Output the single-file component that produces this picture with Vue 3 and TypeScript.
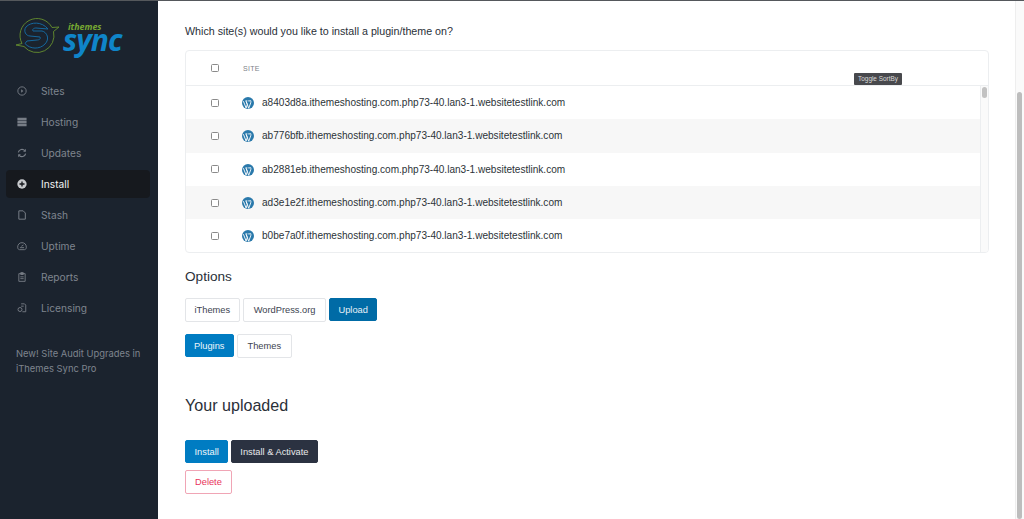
<script setup lang="ts">
const nav: { label: string; icon: string; active?: boolean }[] = [
  { label: 'Sites', icon: 'sites' },
  { label: 'Hosting', icon: 'hosting' },
  { label: 'Updates', icon: 'updates' },
  { label: 'Install', icon: 'install', active: true },
  { label: 'Stash', icon: 'stash' },
  { label: 'Uptime', icon: 'uptime' },
  { label: 'Reports', icon: 'reports' },
  { label: 'Licensing', icon: 'licensing' },
]
const sites: string[] = ['a8403d8a', 'ab776bfb', 'ab2881eb', 'ad3e1e2f', 'b0be7a0f'].map(
  (s) => `${s}.ithemeshosting.com.php73-40.lan3-1.websitetestlink.com`,
)
</script>

<template>
  <div class="page">
    <aside class="sidebar">
      <div class="logo">
        <svg class="logo-mark" width="44" height="36" viewBox="0 0 44 36" fill="none">
          <path d="M6 25.5 L0 27 L8 28.5 A17 17 0 0 0 37.5 13.5 L43 9 L36 9.5 A17 17 0 0 0 6 25.5 Z" stroke="#66902f" stroke-width="0.9" stroke-linejoin="round" />
          <path d="M32 11 C26 3.5 15 3.5 10 9 C7 13 10 18 14 18 L24 19 C25 21 23 22 21 22 L11 23 L9 25.5 C14 31.5 24 31.5 29 26 C34 21 31 14 26 13 L17 13 C16 11 18 10 20 10 Z" stroke="#15689e" stroke-width="1" stroke-linejoin="round" />
        </svg>
        <div class="logo-words">
          <span class="logo-small">ithemes</span>
          <span class="logo-big">sync</span>
        </div>
      </div>
      <nav class="nav">
        <a v-for="item in nav" :key="item.label" class="nav-item" :class="{ active: item.active }">
          <svg class="nav-icon" width="10" height="10" viewBox="0 0 12 12" fill="none" stroke="currentColor" stroke-width="1.1">
            <template v-if="item.icon === 'sites'">
              <circle cx="6" cy="6" r="5" />
              <path d="M5 4 L7.6 6 L5 8 Z" fill="currentColor" stroke="none" />
            </template>
            <template v-else-if="item.icon === 'hosting'">
              <path d="M0.5 1h11v2.8H0.5zM0.5 4.6h11v2.8H0.5zM0.5 8.2h11v2.8H0.5z" fill="currentColor" stroke="none" />
            </template>
            <template v-else-if="item.icon === 'updates'">
              <path d="M1.6 5.2 A4.5 4.5 0 0 1 9.4 3.2 M10.4 6.8 A4.5 4.5 0 0 1 2.6 8.8" stroke-width="1.4" />
              <path d="M10.6 1 V4.4 H7.4 Z M1.4 11 V7.6 H4.6 Z" fill="currentColor" stroke="none" />
            </template>
            <template v-else-if="item.icon === 'install'">
              <circle cx="6" cy="6" r="5.6" fill="currentColor" stroke="none" />
              <path d="M6 3 V9 M3 6 H9" stroke="#16191e" stroke-width="1.6" />
            </template>
            <template v-else-if="item.icon === 'stash'">
              <path d="M2.2 1 H7.4 L10 3.6 V11 H2.2 Z" stroke-width="1.2" stroke-linejoin="round" />
            </template>
            <template v-else-if="item.icon === 'uptime'">
              <path d="M0.8 7.5 C0.8 4 3 2 6 2 C9 2 11.2 4 11.2 7.5 C11.2 9.2 10.2 10.4 9 10.4 H3 C1.8 10.4 0.8 9.2 0.8 7.5 Z" />
              <path d="M3.5 8 H8.5 M5.2 6.4 L7.8 4.8" />
            </template>
            <template v-else-if="item.icon === 'reports'">
              <path d="M2.2 2 H9.8 V11.2 H2.2 Z" />
              <path d="M4.5 0.8 H7.5 V3 H4.5 Z" fill="currentColor" />
              <path d="M4 5.8 H8 M4 8 H8" />
            </template>
            <template v-else>
              <path d="M5 1 H9 L10.5 2.5 V10.5 H6.5" />
              <circle cx="3.6" cy="7.8" r="2.4" />
              <path d="M5 3.8 H8" />
            </template>
          </svg>
          <span>{{ item.label }}</span>
        </a>
      </nav>
      <p class="promo">New! Site Audit Upgrades in iThemes Sync Pro</p>
    </aside>

    <main class="main">
      <p class="question">Which site(s) would you like to install a plugin/theme on?</p>

      <section class="table">
        <div class="thead">
          <span class="cell-check"><span class="checkbox"></span></span>
          <span class="th">SITE</span>
          <span class="tooltip">Toggle SortBy</span>
        </div>
        <div class="tbody">
          <div class="rows">
            <div v-for="site in sites" :key="site" class="row">
              <span class="cell-check"><span class="checkbox"></span></span>
              <svg class="wp" width="12" height="12" viewBox="0 0 12 12">
                <circle cx="6" cy="6" r="6" fill="#2a79ab" />
                <path d="M1.4 4.2 L4.1 11 L5.3 7.6 L4.2 4.4 M4.2 4.4 L6.7 11.3 L8.7 5.9 C9.1 4.8 8.9 3.5 8.2 3.1 M3.4 3.9 H5.4 M6.2 3.9 H8.1" fill="none" stroke="#fff" stroke-width="0.9" />
              </svg>
              <span class="site">{{ site }}</span>
            </div>
          </div>
          <div class="track"><span class="thumb"></span></div>
        </div>
      </section>

      <h2 class="options">Options</h2>
      <div class="btn-row first">
        <button class="btn">iThemes</button>
        <button class="btn wide">WordPress.org</button>
        <button class="btn selected">Upload</button>
      </div>
      <div class="btn-row second">
        <button class="btn primary plugins">Plugins</button>
        <button class="btn wide">Themes</button>
      </div>

      <h2 class="uploaded">Your uploaded</h2>
      <div class="btn-row third">
        <button class="btn primary">Install</button>
        <button class="btn dark">Install &amp; Activate</button>
      </div>
      <div class="btn-row fourth">
        <button class="btn danger">Delete</button>
      </div>
    </main>

    <div class="page-scroll"><span class="page-thumb"></span></div>
  </div>
</template>

<style>
html,
body {
  margin: 0;
  overflow: hidden;
  background: #fff;
}
</style>

<style scoped>
.page {
  position: relative;
  display: flex;
  width: 1024px;
  height: 519px;
  overflow: hidden;
  font-family: 'Liberation Sans', Arial, sans-serif;
  color: #2a3038;
  background: #fff;
}
.page::before {
  content: '';
  position: absolute;
  left: 0;
  right: 0;
  top: 0;
  height: 1px;
  background: #55585c;
}
.sidebar {
  flex: 0 0 158px;
  box-sizing: border-box;
  height: 519px;
  background: #1b232e;
  color: #7f858e;
  font-family: Inter, 'Liberation Sans', sans-serif;
}
.logo {
  display: flex;
  align-items: flex-start;
  gap: 3px;
  height: 70px;
  padding: 18px 0 0 16px;
  box-sizing: border-box;
}
.logo-mark {
  flex: none;
}
.logo-words {
  display: flex;
  flex-direction: column;
  font-family: 'Open Sans', sans-serif;
  font-style: italic;
}
.logo-small {
  color: #77a832;
  font-size: 8.8px;
  font-weight: 700;
  line-height: 8px;
  margin: 5px 0 0 5px;
}
.logo-big {
  color: #0f85c9;
  font-size: 30px;
  font-weight: 700;
  line-height: 14px;
  letter-spacing: -1px;
  margin-top: 2px;
}
.nav {
  display: flex;
  flex-direction: column;
  gap: 3px;
  margin: 7px 8px 0 6px;
}
.nav-item {
  display: flex;
  align-items: center;
  height: 28px;
  padding-left: 11px;
  border-radius: 4px;
  font-size: 10.2px;
}
.nav-item.active {
  background: #16191e;
  color: #f1f2f3;
}
.nav-icon {
  flex: none;
  margin-right: 14px;
  color: #777d86;
}
.active .nav-icon {
  color: #c9cbce;
}
.promo {
  margin: 24px 10px 0 16px;
  font-size: 9.4px;
  line-height: 15px;
  color: #7f858f;
}
.main {
  flex: 1;
  min-width: 0;
  box-sizing: border-box;
  padding: 25px 26px 0 27px;
}
.question {
  margin: 0;
  font-size: 10.7px;
  line-height: 13px;
}
.table {
  box-sizing: border-box;
  height: 203px;
  margin-top: 12px;
  border: 1px solid #eceef0;
  border-radius: 4px;
  overflow: hidden;
  position: relative;
}
.thead {
  display: flex;
  align-items: center;
  height: 35px;
  border-bottom: 1px solid #eceef0;
  box-sizing: border-box;
}
.cell-check {
  flex: none;
  display: flex;
  justify-content: center;
  width: 57px;
}
.checkbox {
  box-sizing: border-box;
  width: 8px;
  height: 8px;
  border: 1px solid #8a8a8a;
  border-radius: 1.5px;
  background: #fff;
}
.th {
  font-size: 7px;
  color: #7c8288;
  letter-spacing: 0.3px;
}
.tooltip {
  position: absolute;
  left: 668px;
  top: 22px;
  box-sizing: border-box;
  width: 48px;
  height: 12px;
  background: #48494d;
  color: #dcdcdc;
  font-size: 6.4px;
  line-height: 12px;
  text-align: center;
  border-radius: 1px;
  white-space: nowrap;
}
.tbody {
  display: flex;
  height: 166px;
}
.rows {
  flex: 1;
  min-width: 0;
  overflow: hidden;
}
.row {
  display: flex;
  align-items: center;
  height: 33.3px;
}
.row:nth-child(even) {
  background: #f7f7f7;
}
.wp {
  flex: none;
  margin: 1px 0 0 -1px;
}
.site {
  margin-left: 8px;
  font-size: 10.07px;
  color: #2c3338;
}
.track {
  flex: 0 0 7px;
  border-left: 1px solid #eceef0;
  background: #fafafa;
}
.thumb {
  display: block;
  width: 5px;
  height: 11px;
  margin: 1px 0 0 1px;
  border-radius: 3px;
  background: #c2c2c2;
}
.options {
  margin: 15px 0 0;
  font-size: 13.6px;
  line-height: 17px;
  font-weight: 400;
}
.btn-row {
  display: flex;
  gap: 3px;
}
.first {
  margin-top: 13px;
}
.second {
  margin-top: 12px;
}
.third {
  margin-top: 25px;
}
.fourth {
  margin-top: 7px;
}
.btn {
  box-sizing: border-box;
  height: 24px;
  padding: 0 8.5px;
  border: 1px solid #e3e5e8;
  border-radius: 2px;
  background: #fff;
  color: #3d4450;
  font-family: inherit;
  font-size: 9.3px;
}
.btn.wide {
  padding: 0 10px;
}
.btn.selected {
  height: 23px;
  padding: 0 8px;
  background: #006ba6;
  border-color: #006ba6;
  color: #e8f1f7;
}
.btn.primary {
  height: 23px;
  background: #007cc2;
  border-color: #007cc2;
  color: #eef6fb;
}
.btn.primary.plugins {
  padding: 0 8px;
}
.btn.dark {
  height: 23px;
  padding: 0 8px;
  background: #2b3241;
  border-color: #2b3241;
  color: #e8e9eb;
}
.btn.danger {
  height: 24px;
  padding: 0 9px;
  border-color: #f0a5b5;
  color: #e8345c;
}
.uploaded {
  margin: 37px 0 0;
  font-size: 16.1px;
  line-height: 20px;
  font-weight: 400;
}
.page-scroll {
  flex: 0 0 9px;
  background: #fafafa;
  border-left: 1px solid #eee;
  box-sizing: border-box;
  height: 519px;
}
.page-thumb {
  display: block;
  width: 5px;
  height: 427px;
  margin: 92px 0 0 1px;
  border-radius: 3px;
  background: #bdbdbd;
}
</style>
